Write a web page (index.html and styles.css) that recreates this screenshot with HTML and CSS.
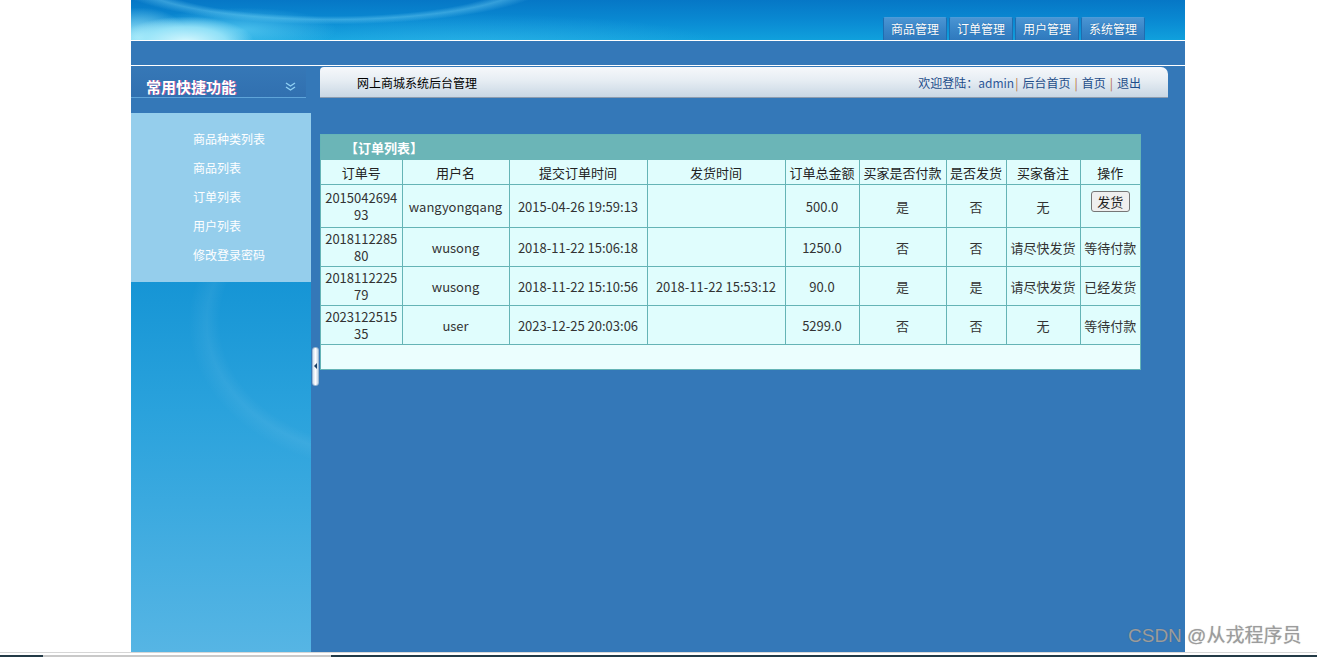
FILE: index.html
```html
<!DOCTYPE html>
<html lang="zh-CN">
<head>
<meta charset="utf-8">
<title>网上商城系统后台管理</title>
<link rel="stylesheet" href="styles.css">
</head>
<body>
<div class="page">
  <div class="frame">
    <header class="top">
      <div class="banner">
        <nav class="tabs">
          <a class="tab">商品管理</a>
          <a class="tab">订单管理</a>
          <a class="tab">用户管理</a>
          <a class="tab">系统管理</a>
        </nav>
      </div>
      <div class="band"></div>
    </header>
    <div class="body">
      <aside class="side">
        <div class="side-head">
          <span class="side-title">常用快捷功能</span>
          <svg class="chev" width="11" height="9" viewBox="0 0 11 9"><path d="M1 1l4.5 3 4.5-3M1 5l4.5 3 4.5-3" fill="none" stroke="#8fd0f4" stroke-width="1.4"/></svg>
        </div>
        <ul class="side-menu">
          <li>商品种类列表</li>
          <li>商品列表</li>
          <li>订单列表</li>
          <li>用户列表</li>
          <li>修改登录密码</li>
        </ul>
        <div class="side-fill"></div>
      </aside>
      <main class="main">
        <div class="toggle"><span class="tri"></span></div>
        <div class="titlebar">
          <span class="sys">网上商城系统后台管理</span>
          <span class="user">欢迎登陆：<span class="admin">admin</span><span class="sep first">|</span>后台首页<span class="sep">|</span>首页<span class="sep">|</span>退出</span>
        </div>
        <section class="panel">
          <div class="panel-head">【订单列表】</div>
          <table class="grid">
            <colgroup>
              <col class="c1"><col class="c2"><col class="c3"><col class="c4"><col class="c5"><col class="c6"><col class="c7"><col class="c8"><col class="c9">
            </colgroup>
            <tr class="hrow">
              <td>订单号</td><td>用户名</td><td>提交订单时间</td><td>发货时间</td><td>订单总金额</td><td>买家是否付款</td><td>是否发货</td><td>买家备注</td><td>操作</td>
            </tr>
            <tr class="r1">
              <td class="num">201504269493</td><td>wangyongqang</td><td>2015-04-26 19:59:13</td><td></td><td>500.0</td><td>是</td><td>否</td><td>无</td><td><button class="btn">发货</button></td>
            </tr>
            <tr class="rn">
              <td class="num">201811228580</td><td>wusong</td><td>2018-11-22 15:06:18</td><td></td><td>1250.0</td><td>否</td><td>否</td><td>请尽快发货</td><td>等待付款</td>
            </tr>
            <tr class="rn">
              <td class="num">201811222579</td><td>wusong</td><td>2018-11-22 15:10:56</td><td>2018-11-22 15:53:12</td><td>90.0</td><td>是</td><td>是</td><td>请尽快发货</td><td>已经发货</td>
            </tr>
            <tr class="rn">
              <td class="num">202312251535</td><td>user</td><td>2023-12-25 20:03:06</td><td></td><td>5299.0</td><td>否</td><td>否</td><td>无</td><td>等待付款</td>
            </tr>
          </table>
          <div class="panel-foot"></div>
        </section>
      </main>
    </div>
  </div>
  <div class="bottom"></div>
  <div class="watermark">CSDN @从戎程序员</div>
</div>
</body>
</html>
```
FILE: styles.css
```css
html, body {
  margin: 0;
  padding: 0;
  background: #fff;
}
body {
  font-family: "Noto Sans CJK SC", "Noto Sans", sans-serif;
  font-size: 12px;
  color: #333;
}
.page {
  position: relative;
  width: 1317px;
  height: 657px;
  overflow: hidden;
}
.frame {
  width: 1054px;
  height: 652px;
  margin-left: 131px;
  display: flex;
  flex-direction: column;
  background: #3478b8;
}

/* header */
.banner {
  box-sizing: border-box;
  height: 41px;
  border-bottom: 1px solid #fff;
  display: flex;
  justify-content: flex-end;
  align-items: flex-end;
  padding-right: 40px;
  background:
    radial-gradient(ellipse 80px 30px at 55px 42px, rgba(215, 248, 254, 1), rgba(160, 232, 250, 0.85) 50%, rgba(60, 180, 230, 0) 85%),
    radial-gradient(ellipse 60px 36px at 8px 38px, rgba(180, 240, 252, 0.95), rgba(120, 215, 245, 0) 85%),
    radial-gradient(ellipse 120px 28px at 110px 30px, rgba(100, 210, 245, 0.7), rgba(60, 180, 230, 0) 80%),
    radial-gradient(ellipse 300px 60px at 200px -20px, rgba(10, 110, 190, 0) 60%, rgba(110, 205, 242, 0.45) 66%, rgba(20, 140, 210, 0) 74%),
    radial-gradient(ellipse 360px 46px at 340px 46px, rgba(70, 195, 240, 0.45), rgba(20, 140, 210, 0) 70%),
    linear-gradient(180deg, #0677c6 0%, #0a8bd3 55%, #10a0dc 100%);
}
.tabs {
  display: flex;
  gap: 2px;
}
.tab {
  display: block;
  width: 64px;
  height: 23px;
  box-sizing: border-box;
  border: 1px solid #1f6db0;
  border-top-color: #4d9bd8;
  border-bottom: none;
  border-radius: 2px 2px 0 0;
  background: linear-gradient(180deg, #4a95d3 0%, #3a86c8 50%, #2f79bd 100%);
  color: #fff;
  font-size: 12px;
  line-height: 22px;
  text-align: center;
  text-shadow: 0 0 1px #1d5d96;
}
.band {
  height: 24px;
  background: #3478b8;
  border-bottom: 1px solid #fff;
}

/* body */
.body {
  flex: 1;
  display: flex;
  min-height: 0;
}
.side {
  width: 180px;
  display: flex;
  flex-direction: column;
}
.side-head {
  width: 175px;
  height: 32px;
  box-sizing: border-box;
  padding: 11px 10px 0 15px;
  display: flex;
  justify-content: space-between;
  align-items: flex-start;
  border-bottom: 1px solid #5ea4d9;
  background: linear-gradient(180deg, #3678b7 0%, #3170b0 100%);
}
.side-title {
  color: #fff;
  font-size: 15px;
  font-weight: bold;
  line-height: 20px;
  text-shadow: 1px 0 0 #b04a9a;
}
.chev {
  margin-top: 5px;
}
.side-menu {
  list-style: none;
  margin: 15px 0 0;
  padding: 11px 0 0 62px;
  height: 169px;
  box-sizing: border-box;
  background: #95ceec;
}
.side-menu li {
  color: #fff;
  font-size: 12px;
  line-height: 29px;
  height: 29px;
}
.side-fill {
  flex: 1;
  background:
    radial-gradient(ellipse 260px 200px at 250px 40px, rgba(255, 255, 255, 0) 62%, rgba(255, 255, 255, 0.06) 67%, rgba(255, 255, 255, 0) 74%),
    linear-gradient(180deg, #1695d5 0%, #2aa2dc 35%, #56b5e4 100%);
}

/* main */
.main {
  position: relative;
  flex: 1;
  padding: 1px 17px 0 9px;
  display: flex;
  flex-direction: column;
  align-items: flex-start;
}
.toggle {
  position: absolute;
  left: 1px;
  top: 281px;
  width: 7px;
  height: 39px;
  box-sizing: border-box;
  border: 1px solid #9cb7d0;
  border-radius: 3px;
  background: linear-gradient(90deg, #cfdff0 0%, #ffffff 50%, #c4d6e8 100%);
}
.tri {
  position: absolute;
  left: 1px;
  top: 15px;
  width: 0;
  height: 0;
  border-top: 3px solid transparent;
  border-bottom: 3px solid transparent;
  border-right: 3px solid #1b3f66;
}
.titlebar {
  width: 848px;
  height: 31px;
  box-sizing: border-box;
  border-bottom: 1px solid #8c9caf;
  border-radius: 4px 7px 0 0;
  background: linear-gradient(180deg, #f6f8fb 0%, #e6edf3 45%, #c9d7e4 100%);
  display: flex;
  justify-content: space-between;
  align-items: center;
  padding: 0 27px 0 37px;
}
.sys {
  color: #000;
  font-size: 12px;
}
.user {
  color: #1d4d8a;
  font-size: 12px;
  white-space: nowrap;
}
.admin {
  color: #2d5798;
}
.sep {
  color: #b8703e;
  margin: 0 4px;
}
.sep.first {
  margin-left: 1px;
}

.panel {
  margin-top: 36px;
  width: 821px;
  box-sizing: border-box;
  border: 1px solid #65b4b6;
  background: #e0fdfd;
}
.panel-head {
  height: 25px;
  background: #6bb5b7;
  color: #fff;
  font-size: 13px;
  font-weight: bold;
  line-height: 25px;
  padding-left: 24px;
}
.grid {
  width: 819px;
  table-layout: fixed;
  border-collapse: collapse;
  border-style: hidden;
  background: #e0fdfd;
}
.c1 { width: 81px; }
.c2 { width: 107px; }
.c3 { width: 138px; }
.c4 { width: 138px; }
.c5 { width: 74px; }
.c6 { width: 87px; }
.c7 { width: 60px; }
.c8 { width: 74px; }
.c9 { width: 60px; }
.grid td {
  border: 1px solid #65b4b6;
  text-align: center;
  vertical-align: middle;
  font-size: 13px;
  line-height: 17px;
  color: #333;
  padding: 0 3px;
  word-break: break-all;
}
.hrow td {
  height: 24px;
  color: #222;
}
.r1 td {
  height: 42px;
}
.rn td {
  height: 38px;
}
.btn {
  font-family: "Noto Sans CJK SC", sans-serif;
  font-size: 13px;
  line-height: 17px;
  height: 21px;
  width: 39px;
  padding: 0;
  margin-bottom: 10px;
  border: 1px solid #767676;
  border-radius: 3px;
  background: #efefef;
  color: #222;
}
.panel-foot {
  height: 24px;
  border-top: 1px solid #65b4b6;
  background: #ebfefe;
}

.bottom {
  height: 5px;
  border-top: 1px solid #d6d6d6;
  box-sizing: border-box;
  background: linear-gradient(90deg, #233a46 0 43px, #c9c9c9 43px 331px, #233a46 331px) bottom / 100% 2px no-repeat, #fff;
}
.watermark {
  position: absolute;
  left: 1128px;
  top: 624px;
  font-family: "Liberation Sans", "Noto Sans CJK SC", sans-serif;
  font-size: 19px;
  line-height: 24px;
  color: #9c9c9c;
  text-shadow: 0 0 1px rgba(60, 60, 60, 0.35);
  white-space: nowrap;
}
```
